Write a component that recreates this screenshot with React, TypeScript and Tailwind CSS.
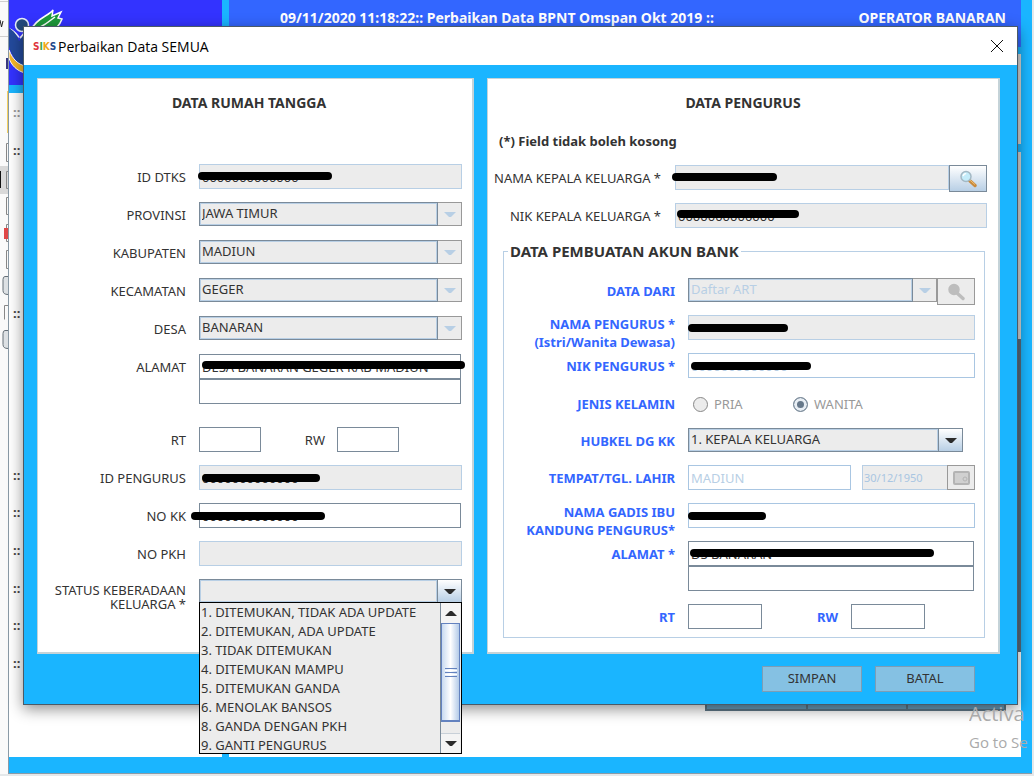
import { ReactNode, useState } from "react";
import clsx from "clsx";

type Tone = "readonly" | "normal" | "soft";

const fieldTone: Record<Tone, string> = {
  readonly: "bg-[#ececec] border-[#b8cfe5] text-[#333]",
  normal: "bg-white border-[#7a8a99] text-[#333]",
  soft: "bg-white border-[#a9c6e2] text-[#b8cfe5]",
};

// black marker stroke laid over private values
const Marker = ({ className }: { className: string }) => (
  <span aria-hidden="true" className={clsx("pointer-events-none absolute z-10 h-2 rounded-full bg-black", className)} />
);

interface FieldProps {
  id: string;
  value?: string;
  tone?: Tone;
  className?: string;
  label?: string;
}

const Field = ({ id, value = "", tone = "normal", className = "w-full", label }: FieldProps) => (
  <input
    id={id}
    type="text"
    aria-label={label}
    defaultValue={value}
    readOnly={tone === "readonly"}
    className={clsx("block h-[25px] border px-0.5 text-[13px] outline-none", fieldTone[tone], className)}
  />
);

const Arrow = ({ up, color }: { up?: boolean; color: string }) => (
  <svg width="12" height="7" viewBox="0 0 12 7" fill={color} aria-hidden="true">
    <path d={up ? "M0 6h12L7 1H5z" : "M0 1h12L7 6H5z"} />
  </svg>
);

interface ComboProps {
  id: string;
  value: string;
  active?: boolean;
  faded?: boolean;
  className?: string;
}

const Combo = ({ id, value, active, faded, className }: ComboProps) => (
  <div className={clsx("flex h-6", className)}>
    <select
      id={id}
      disabled={!active}
      defaultValue={value}
      className={clsx(
        "min-w-0 flex-1 appearance-none border border-[#7a8a99] bg-[#ececec] px-0.5 text-[13px] opacity-100 shadow-[inset_0_0_0_1px_#b8cfe5] outline-none",
        faded ? "text-[#b8cfe5]" : "text-[#333]",
      )}
    >
      <option value={value}>{value}</option>
    </select>
    <span
      className={clsx(
        "flex w-6 items-center justify-center border-y border-r",
        active ? "border-[#7a8a99] bg-linear-to-b from-white to-[#b8cfe5]" : "border-[#999] bg-[#ececec]",
      )}
    >
      <Arrow color={active ? "#2b2b2b" : "#b8cfe5"} />
    </span>
  </div>
);

const Magnifier = ({ muted }: { muted?: boolean }) => (
  <svg width="18" height="18" viewBox="0 0 18 18" fill="none" aria-hidden="true">
    <path d="M10.5 10.5l5.5 5" stroke={muted ? "#bdbdbd" : "#c98a3c"} strokeWidth="3.4" strokeLinecap="round" />
    {!muted && <path d="M11 10.2l4.6 4.1" stroke="#f0c070" strokeWidth="1" strokeLinecap="round" />}
    <circle
      cx="7"
      cy="6.5"
      r="5"
      fill={muted ? "#bdbdbd" : "#c4ecfa"}
      stroke={muted ? "#bdbdbd" : "#a3b8c4"}
      strokeWidth="1.5"
    />
    {!muted && <path d="M4.2 6.2a3 3 0 0 1 3-2.6" stroke="#fff" strokeWidth="1.4" />}
  </svg>
);

interface RowProps {
  htmlFor: string;
  label: ReactNode;
  children: ReactNode;
  className?: string;
  lines?: string;
}

const LeftRow = ({ htmlFor, label, children, className = "h-[25px]", lines = "leading-[26px]" }: RowProps) => (
  <div className={clsx("flex items-start gap-[13px]", className)}>
    <label htmlFor={htmlFor} className={clsx("w-[148px] shrink-0 text-right", lines)}>
      {label}
    </label>
    <div className="relative flex min-w-0 flex-1">{children}</div>
  </div>
);

const BankRow = ({ htmlFor, label, children, className = "h-[25px]", lines = "leading-[26px]" }: RowProps) => (
  <div className={clsx("flex items-start gap-[13px]", className)}>
    <label htmlFor={htmlFor} className={clsx("w-[170px] shrink-0 text-right font-bold text-[#3366ff]", lines)}>
      {label}
    </label>
    <div className="relative flex min-w-0 flex-1">{children}</div>
  </div>
);

const statuses = [
  "1. DITEMUKAN, TIDAK ADA UPDATE",
  "2. DITEMUKAN, ADA UPDATE",
  "3. TIDAK DITEMUKAN",
  "4. DITEMUKAN MAMPU",
  "5. DITEMUKAN GANDA",
  "6. MENOLAK BANSOS",
  "8. GANDA DENGAN PKH",
  "9. GANTI PENGURUS",
];

const StatusMenu = () => (
  <div className="absolute inset-x-0 top-[23px] z-20 flex h-[152px] overflow-hidden border border-black bg-[#ececec]">
    <ul role="listbox" aria-label="Status keberadaan keluarga" className="flex-1 pl-px">
      {statuses.map((s) => (
        <li key={s} role="option" aria-selected={false} className="h-[19px] whitespace-nowrap leading-[18px]">
          {s}
        </li>
      ))}
    </ul>
    <div className="flex w-[21px] flex-col border-l border-[#7a8a99] pr-px">
      <button type="button" aria-label="Naik" className="flex h-5 items-center justify-center bg-[#f4f4f4]">
        <Arrow up color="#2b2b2b" />
      </button>
      <div className="flex h-[99px] flex-col items-center justify-center gap-px border border-b-2 border-[#6382bf] bg-linear-to-r from-[#c8daf0] via-white to-[#b4cbe8]">
        <span className="h-px w-3 bg-[#6382bf]" />
        <span className="h-px w-3 bg-white" />
        <span className="h-px w-3 bg-[#6382bf]" />
        <span className="h-px w-3 bg-white" />
        <span className="h-px w-3 bg-[#6382bf]" />
      </div>
      <div className="flex-1" />
      <button
        type="button"
        aria-label="Turun"
        className="flex h-5 items-center justify-center border-t border-[#c8d0d8] bg-[#f4f4f4]"
      >
        <Arrow color="#2b2b2b" />
      </button>
    </div>
  </div>
);

const panel = "min-w-0 border border-r-2 border-b-2 border-[#c5d3d8] bg-white";

const HouseholdPanel = () => (
  <section className={clsx(panel, "pt-[14px]")}>
    <h2 className="pr-3 text-center text-sm leading-5 font-bold">DATA RUMAH TANGGA</h2>
    <div className="mt-[51px] flex flex-col gap-[13px] pr-[10px]">
      <LeftRow htmlFor="dtks" label="ID DTKS">
        <Field id="dtks" tone="readonly" value="0000000000000" />
        <Marker className="-left-px top-2 w-[134px]" />
      </LeftRow>
      <LeftRow htmlFor="prov" label="PROVINSI">
        <Combo id="prov" value="JAWA TIMUR" className="w-full" />
      </LeftRow>
      <LeftRow htmlFor="kab" label="KABUPATEN">
        <Combo id="kab" value="MADIUN" className="w-full" />
      </LeftRow>
      <LeftRow htmlFor="kec" label="KECAMATAN">
        <Combo id="kec" value="GEGER" className="w-full" />
      </LeftRow>
      <LeftRow htmlFor="desa" label="DESA">
        <Combo id="desa" value="BANARAN" className="w-full" />
      </LeftRow>
      <LeftRow htmlFor="alamat" label="ALAMAT" className="h-[60px]">
        <div className="w-full pr-px">
          <Field id="alamat" value="DESA BANARAN GEGER KAB MADIUN" />
          <Field id="alamat2" label="Alamat baris 2" />
        </div>
        <Marker className="left-[3px] top-[7px] w-[263px]" />
      </LeftRow>
      <LeftRow htmlFor="rt" label="RT">
        <Field id="rt" className="w-[62px]" />
        <label htmlFor="rw" className="w-16 text-right leading-[26px]">
          RW
        </label>
        <Field id="rw" className="ml-3 w-[62px]" />
      </LeftRow>
      <LeftRow htmlFor="idp" label="ID PENGURUS">
        <Field id="idp" tone="readonly" value="0000000000000" />
        <Marker className="left-[3px] top-[9px] w-[118px]" />
      </LeftRow>
      <LeftRow htmlFor="kk" label="NO KK">
        <div className="w-full pr-px">
          <Field id="kk" value="0000000000000" />
        </div>
        <Marker className="-left-2 top-[9px] w-[134px]" />
      </LeftRow>
      <LeftRow htmlFor="pkh" label="NO PKH">
        <Field id="pkh" tone="readonly" />
      </LeftRow>
      <LeftRow
        htmlFor="status"
        label={
          <>
            STATUS KEBERADAAN
            <br />
            KELUARGA *
          </>
        }
        lines="pt-1 leading-[14px] whitespace-nowrap"
      >
        <Combo id="status" value="" active className="w-full" />
        <StatusMenu />
      </LeftRow>
    </div>
  </section>
);

const BankFieldset = () => {
  const [gender, setGender] = useState("WANITA");
  return (
    <fieldset className="mt-[13px] mr-[13px] ml-[15px] min-w-0 border border-[#b8cfe5] pr-[9px] pb-2 pl-px">
      <legend className="ml-[3px] px-0.5 text-[15px] leading-5 font-bold">DATA PEMBUATAN AKUN BANK</legend>
      <div className="flex flex-col gap-[13px] pt-[17px]">
        <BankRow htmlFor="dari" label="DATA DARI" className="h-6">
          <Combo id="dari" value="Daftar ART" faded className="flex-1" />
          <button
            type="button"
            disabled
            aria-label="Cari ART"
            className="flex h-[27px] w-[38px] items-center justify-center border border-[#999] bg-[#ececec]"
          >
            <Magnifier muted />
          </button>
        </BankRow>
        <BankRow
          htmlFor="nama"
          label={
            <>
              NAMA PENGURUS *<br />
              (Istri/Wanita Dewasa)
            </>
          }
          lines="leading-[18px]"
        >
          <Field id="nama" tone="readonly" />
          <Marker className="left-0 top-[9px] w-[100px]" />
        </BankRow>
        <BankRow htmlFor="nik" label="NIK PENGURUS *">
          <Field id="nik" tone="soft" value="0000000000000" />
          <Marker className="left-[3px] top-[9px] w-[120px]" />
        </BankRow>
        <BankRow htmlFor="pria" label="JENIS KELAMIN" className="h-6">
          {["PRIA", "WANITA"].map((g) => (
            <label key={g} className="flex w-[100px] items-center gap-1.5 pl-[5px] leading-[26px] text-[#999]">
              <input
                type="radio"
                id={g.toLowerCase()}
                name="gender"
                value={g}
                disabled
                checked={gender === g}
                onChange={() => setGender(g)}
                className="size-[15px] shrink-0 appearance-none rounded-full border border-[#888] bg-[#ececec] checked:border-[#7a8a99] checked:bg-[#66788a] checked:shadow-[inset_0_0_0_3px_#e8eef4]"
              />
              {g}
            </label>
          ))}
        </BankRow>
        <BankRow htmlFor="hubkel" label="HUBKEL DG KK" className="h-6">
          <Combo id="hubkel" value="1. KEPALA KELUARGA" active className="mr-3 flex-1" />
        </BankRow>
        <BankRow htmlFor="tempat" label="TEMPAT/TGL. LAHIR">
          <Field id="tempat" tone="soft" value="MADIUN" className="min-w-0 flex-1" />
          <input
            id="tgl"
            type="text"
            aria-label="Tanggal lahir"
            readOnly
            defaultValue="30/12/1950"
            className="ml-[11px] block h-[25px] w-[85px] border border-r-0 border-[#b8cfe5] bg-[#ececec] px-px text-[11px] text-[#a9c6e2] outline-none"
          />
          <button
            type="button"
            disabled
            aria-label="Pilih tanggal"
            className="flex h-[25px] w-7 items-center justify-center border border-[#999] bg-[#ececec]"
          >
            <svg width="17" height="14" viewBox="0 0 17 14" fill="none" aria-hidden="true">
              <rect x="1" y="1" width="15" height="12" rx="1" fill="#d0d0d0" stroke="#b4b4b4" strokeWidth="2" />
              <circle cx="12" cy="8" r="2" stroke="#b4b4b4" />
            </svg>
          </button>
        </BankRow>
        <BankRow
          htmlFor="ibu"
          label={
            <>
              NAMA GADIS IBU
              <br />
              KANDUNG PENGURUS*
            </>
          }
          lines="leading-[18px]"
        >
          <Field id="ibu" tone="soft" />
          <Marker className="left-0 top-[9px] w-[78px]" />
        </BankRow>
        <BankRow htmlFor="alamatp" label="ALAMAT *" className="h-[50px]">
          <div className="w-full pr-px">
            <Field id="alamatp" value="DS BANARAN" />
            <Field id="alamatp2" label="Alamat baris 2" />
          </div>
          <Marker className="left-[2px] top-2 w-[244px]" />
        </BankRow>
        <BankRow htmlFor="rtp" label="RT">
          <Field id="rtp" className="w-[74px]" />
          <label htmlFor="rwp" className="w-[76px] text-right leading-[26px] font-bold text-[#3366ff]">
            RW
          </label>
          <Field id="rwp" className="ml-[13px] w-[74px]" />
        </BankRow>
      </div>
    </fieldset>
  );
};

const ManagerPanel = () => (
  <section className={clsx(panel, "pt-[14px] pb-[14px]")}>
    <h2 className="text-center text-sm leading-5 font-bold">DATA PENGURUS</h2>
    <p className="mt-[18px] pl-[11px] leading-5 font-bold">(*) Field tidak boleh kosong</p>
    <div className="mt-[14px] flex flex-col gap-[13px] pr-[11px]">
      <div className="flex h-[25px] gap-[14px]">
        <label htmlFor="kepala" className="w-[173px] shrink-0 text-right leading-[26px] whitespace-nowrap">
          NAMA KEPALA KELUARGA *
        </label>
        <div className="relative flex min-w-0 flex-1">
          <Field id="kepala" tone="readonly" className="min-w-0 flex-1" />
          <button
            type="button"
            aria-label="Cari kepala keluarga"
            className="flex h-[27px] w-[38px] items-center justify-center border border-[#7a8a99] bg-linear-to-b from-white to-[#b8cfe5]"
          >
            <Magnifier />
          </button>
          <Marker className="-left-[3px] top-2 w-[105px]" />
        </div>
      </div>
      <div className="flex h-[25px] gap-[14px]">
        <label htmlFor="nikk" className="w-[173px] shrink-0 text-right leading-[26px] whitespace-nowrap">
          NIK KEPALA KELUARGA *
        </label>
        <div className="relative min-w-0 flex-1">
          <Field id="nikk" tone="readonly" value="0000000000000" />
          <Marker className="left-[2px] top-[7px] w-[122px]" />
        </div>
      </div>
    </div>
    <BankFieldset />
  </section>
);

const actionBtn = "h-[26px] w-[100px] border border-[#7d9db5] bg-[#85c1e3] text-[#333]";

const Dialog = () => (
  <div
    role="dialog"
    aria-labelledby="dialog-title"
    className="absolute top-[26px] right-[16px] left-[23px] border border-[#4b5a66] bg-[#1ab5ff] shadow-[0_4px_14px_rgba(0,0,0,0.45)]"
  >
    <div className="flex h-[38px] items-center bg-white pr-[13px] pl-[9px]">
      <span
        aria-hidden="true"
        className="w-[25px] font-['DejaVu_Sans_Condensed','Liberation_Sans',sans-serif] text-[10px] font-bold"
      >
        <span className="text-[#e0343c]">S</span>
        <span className="text-[#3fa34d]">I</span>
        <span className="text-[#f0a818]">K</span>
        <span className="text-[#234a8c]">S</span>
      </span>
      <h1 id="dialog-title" className="flex-1 font-['Open_Sans',sans-serif] text-[14px] text-black">
        Perbaikan Data SEMUA
      </h1>
      <button type="button" aria-label="Tutup">
        <svg width="14" height="14" viewBox="0 0 14 14" stroke="#111" aria-hidden="true">
          <path d="M1 1l12 12M13 1L1 13" />
        </svg>
      </button>
    </div>
    <div className="grid grid-cols-[minmax(0,437fr)_minmax(0,513fr)] gap-[13px] pt-[13px] pr-[17px] pl-[13px]">
      <HouseholdPanel />
      <ManagerPanel />
    </div>
    <div className="flex justify-end gap-[13px] pt-3 pr-[42px] pb-3">
      <button type="button" className={actionBtn}>
        SIMPAN
      </button>
      <button type="button" className={actionBtn}>
        BATAL
      </button>
    </div>
  </div>
);

const AgencyLogo = () => (
  <svg width="56" height="66" viewBox="0 0 56 66" className="mt-2" aria-hidden="true">
    <path d="M22 22C27 10 40 8 44 2l-1 6 9-4-3 6 4 1c-2 6-8 12-12 14H22z" fill="#1d9a3c" stroke="#fff" strokeWidth="1.5" />
    <path d="M26 22C34 18 40 14 46 9" stroke="#fff" strokeWidth="1.5" fill="none" />
    <path d="M0 20c8 3 12 10 15 18V24L10 30z" fill="#fff" />
    <circle cx="13" cy="17" r="6.5" fill="#234a7c" stroke="#e8eef8" strokeWidth="1.5" />
    <path d="M0 20c5 3 8 7 10 13l6-8v36C8 54 2 48 0 38z" fill="#234a9c" />
    <path d="M0 42c4 10 9 14 16 16v7C8 63 2 57 0 50z" fill="#f6b82a" stroke="#fff" strokeWidth="1" />
  </svg>
);

const ExplorerEdge = () => (
  <div className="w-2 shrink-0 overflow-hidden bg-[#fafafa] text-black">
    <svg width="8" height="360" viewBox="0 0 8 360" aria-hidden="true">
      <path d="M0 1.500h8M0 36.500h8" stroke="#cfcfcf" />
      <path d="M0 20l1.500 7 1.500-6" stroke="#222" fill="none" />
      <path d="M7 58v11" stroke="#3a3a80" strokeWidth="2" />
      <path d="M7 91h1v42H7z" fill="#f4d060" />
      <path d="M0 166h8v28H0z" fill="#d9d9d9" />
      <path d="M0 171h1v17H0z" fill="#111" />
      <path d="M8 143.500H6.500v18H8M8 171.500H6.500v17H8M8 197.500H6.500v17H8M8 224.500H6.500v17H8M8 250.500H6.500v18H8M8 305.500H4.500v14" stroke="#888" fill="none" />
      <path d="M4 228h4v11H4z" fill="#e04848" />
      <path d="M8 276.500H5q-2 0-2 3v11q0 4 5 4M8 330.500H5q-2 0-2 3v11q0 4 5 4" stroke="#667078" fill="#dde1e4" />
    </svg>
  </div>
);

const rowMarks = ["mt-[20px]", "mt-[145px]", "mt-[144px]", "mt-[19px]", "mt-[20px]", "mt-[20px]", "mt-[19px]", "mt-[20px]"];

const MainWindow = () => (
  <div className="flex min-w-0 flex-1 flex-col border-b border-l border-[#8a9aa6] bg-[#1ab5ff]">
    <div className="flex flex-1">
      <aside className="flex w-[213px] flex-col">
        <div className="h-[85px] bg-[#3333ff]">
          <AgencyLogo />
        </div>
        <div className="flex mt-2 flex-1 flex-col bg-white pl-1 leading-[18px] font-bold text-[#444]">
          <div className="mt-[10px] text-[#999]">::</div>
          {rowMarks.map((m, i) => (
            <div key={i} className={m}>
              ::
            </div>
          ))}
        </div>
      </aside>
      <div className="ml-[7px] flex flex-1 flex-col">
        <header className="flex h-[47px] justify-between bg-[#3366ff] pt-2 pr-[15px] pl-[51px] text-sm leading-5 font-bold text-white">
          <span>09/11/2020 11:18:22:: Perbaikan Data BPNT Omspan Okt 2019 ::</span>
          <span>OPERATOR BANARAN</span>
        </header>
        <div className="mt-[7px] h-[90px] bg-[#d4d4d4]" />
        <div className="mt-2 h-[187px] bg-[#d4d4d4]" />
        <div className="h-[313px] bg-[#566b7d]" />
        <div className="flex-1 bg-white pt-[32px] pr-[15px]">
          <div className="flex h-[27px] justify-end">
            <div className="w-[101px] border-2 border-r-0 border-[#5f7888] bg-[#6c9fbd]" />
            <div className="w-[100px] border-2 border-r-0 border-[#5f7888] bg-[#6c9fbd]" />
            <div className="w-[100px] border-2 border-[#5f7888] bg-[#6c9fbd]" />
          </div>
        </div>
      </div>
      <div className="w-[11px]" />
    </div>
    <div className="h-4" />
  </div>
);

export default function App() {
  return (
    <div className="relative flex min-h-screen overflow-hidden bg-[#e4e8ea] pr-0.5 pb-0.5 font-['Noto_Sans','DejaVu_Sans',sans-serif] text-[13px] text-[#333]">
      <ExplorerEdge />
      <MainWindow />
      <Dialog />
      <div className="pointer-events-none absolute right-0 bottom-5 w-[65px] overflow-hidden font-['Open_Sans',sans-serif] whitespace-nowrap text-[#aaa]">
        <p className="text-xl leading-7">Activa</p>
        <p className="text-[15px] leading-7">Go to Se</p>
      </div>
    </div>
  );
}
